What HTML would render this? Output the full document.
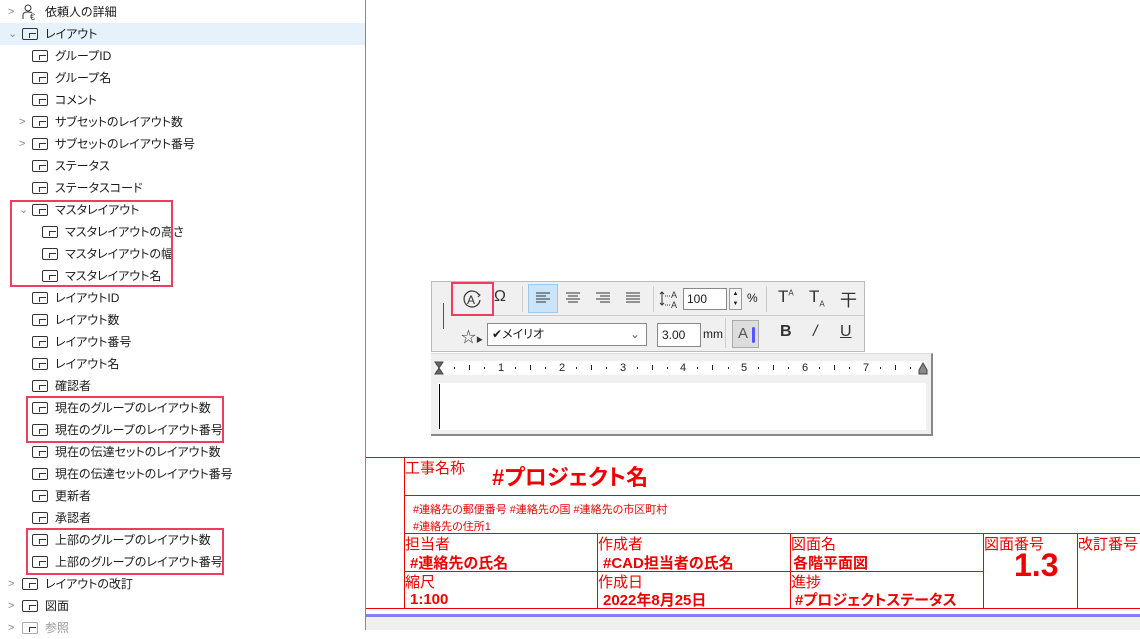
<!DOCTYPE html>
<html><head><meta charset="utf-8"><style>
*{margin:0;padding:0;box-sizing:border-box}
body{width:1140px;height:630px;overflow:hidden;background:#fff;position:relative;font-family:"Liberation Sans","Noto Sans CJK JP",sans-serif;font-size:12px;color:#1a1a1a;font-feature-settings:"palt"}
.a{position:absolute}
.r{position:absolute;height:22px;line-height:22px;white-space:nowrap}
.ic{position:absolute;top:5px;width:16px;height:12px;border:1.3px solid #333;border-radius:2px}
.ic:after{content:"";position:absolute;right:1px;bottom:1px;width:6px;height:4px;border-top:1px solid #333;border-left:1px solid #333}
.ar{position:absolute;top:0;color:#888;font-size:11px}
.t{position:absolute;top:0}
.box{position:absolute;border:2px solid #f03c5f}
.rd{color:#e00;position:absolute;white-space:nowrap}
.hl{position:absolute;height:1px;background:#e00}
.vl{position:absolute;width:1px;background:#e00}
.btn{position:absolute;font-size:16px;color:#333}
.d{position:absolute;top:367px;width:1px;height:2px;background:#222}
.k{position:absolute;top:365px;width:1px;height:5px;background:#222}
.n{position:absolute;top:361px;font-size:11px;line-height:14px;width:10px;margin-left:-4px;text-align:center;color:#222}
</style></head><body>
<div class="a" style="left:365px;top:0;width:1px;height:630px;background:#888"></div>
<div class="a" style="left:0;top:23px;width:365px;height:22px;background:#e5f1fb"></div>

<div class="r" style="top:1px;left:0;width:360px"><span class="ar" style="left:8px">&gt;</span>
<svg class="a" style="left:21px;top:3px" width="20" height="17" viewBox="0 0 20 17"><circle cx="7" cy="4" r="3" fill="none" stroke="#333"/><path d="M2 15 V11 Q2 8 7 8 Q10 8 11 9" fill="none" stroke="#333"/><text x="9" y="16" font-size="9" fill="#333" font-family="Liberation Sans">€</text></svg>
<span class="t" style="left:45px">依頼人の詳細</span></div>
<div class="r" style="top:23px;left:0"><span class="ar" style="left:8px">⌄</span><span class="ic" style="left:22px"></span><span class="t" style="left:45px">レイアウト</span></div>
<div class="r" style="top:45px"><span class="ic" style="left:32px"></span><span class="t" style="left:55px">グループID</span></div>
<div class="r" style="top:67px"><span class="ic" style="left:32px"></span><span class="t" style="left:55px">グループ名</span></div>
<div class="r" style="top:89px"><span class="ic" style="left:32px"></span><span class="t" style="left:55px">コメント</span></div>
<div class="r" style="top:111px"><span class="ar" style="left:19px">&gt;</span><span class="ic" style="left:32px"></span><span class="t" style="left:55px">サブセットのレイアウト数</span></div>
<div class="r" style="top:133px"><span class="ar" style="left:19px">&gt;</span><span class="ic" style="left:32px"></span><span class="t" style="left:55px">サブセットのレイアウト番号</span></div>
<div class="r" style="top:155px"><span class="ic" style="left:32px"></span><span class="t" style="left:55px">ステータス</span></div>
<div class="r" style="top:177px"><span class="ic" style="left:32px"></span><span class="t" style="left:55px">ステータスコード</span></div>
<div class="r" style="top:199px"><span class="ar" style="left:19px">⌄</span><span class="ic" style="left:32px"></span><span class="t" style="left:55px">マスタレイアウト</span></div>
<div class="r" style="top:221px"><span class="ic" style="left:42px"></span><span class="t" style="left:65px">マスタレイアウトの高さ</span></div>
<div class="r" style="top:243px"><span class="ic" style="left:42px"></span><span class="t" style="left:65px">マスタレイアウトの幅</span></div>
<div class="r" style="top:265px"><span class="ic" style="left:42px"></span><span class="t" style="left:65px">マスタレイアウト名</span></div>
<div class="r" style="top:287px"><span class="ic" style="left:32px"></span><span class="t" style="left:55px">レイアウトID</span></div>
<div class="r" style="top:309px"><span class="ic" style="left:32px"></span><span class="t" style="left:55px">レイアウト数</span></div>
<div class="r" style="top:331px"><span class="ic" style="left:32px"></span><span class="t" style="left:55px">レイアウト番号</span></div>
<div class="r" style="top:353px"><span class="ic" style="left:32px"></span><span class="t" style="left:55px">レイアウト名</span></div>
<div class="r" style="top:375px"><span class="ic" style="left:32px"></span><span class="t" style="left:55px">確認者</span></div>
<div class="r" style="top:397px"><span class="ic" style="left:32px"></span><span class="t" style="left:55px">現在のグループのレイアウト数</span></div>
<div class="r" style="top:419px"><span class="ic" style="left:32px"></span><span class="t" style="left:55px">現在のグループのレイアウト番号</span></div>
<div class="r" style="top:441px"><span class="ic" style="left:32px"></span><span class="t" style="left:55px">現在の伝達セットのレイアウト数</span></div>
<div class="r" style="top:463px"><span class="ic" style="left:32px"></span><span class="t" style="left:55px">現在の伝達セットのレイアウト番号</span></div>
<div class="r" style="top:485px"><span class="ic" style="left:32px"></span><span class="t" style="left:55px">更新者</span></div>
<div class="r" style="top:507px"><span class="ic" style="left:32px"></span><span class="t" style="left:55px">承認者</span></div>
<div class="r" style="top:529px"><span class="ic" style="left:32px"></span><span class="t" style="left:55px">上部のグループのレイアウト数</span></div>
<div class="r" style="top:551px"><span class="ic" style="left:32px"></span><span class="t" style="left:55px">上部のグループのレイアウト番号</span></div>
<div class="r" style="top:573px"><span class="ar" style="left:8px">&gt;</span><span class="ic" style="left:22px"></span><span class="t" style="left:45px">レイアウトの改訂</span></div>
<div class="r" style="top:595px"><span class="ar" style="left:8px">&gt;</span><span class="ic" style="left:22px"></span><span class="t" style="left:45px">図面</span></div>
<div class="r" style="top:617px;color:#999"><span class="ar" style="left:8px">&gt;</span><span class="ic" style="left:22px;border-color:#aaa"></span><span class="t" style="left:45px">参照</span></div>

<div class="box" style="left:10px;top:200px;width:163px;height:87px"></div>
<div class="box" style="left:26px;top:396px;width:198px;height:47px"></div>
<div class="box" style="left:26px;top:528px;width:198px;height:47px"></div>

<!-- toolbar -->
<div class="a" style="left:431px;top:281px;width:434px;height:71px;background:#f0f0f0;border:1px solid #bbb"></div>
<div class="a" style="left:456px;top:315px;width:408px;height:1px;background:#ccc"></div>
<div class="a" style="left:443px;top:303px;width:1px;height:26px;background:#555"></div>
<div class="box" style="left:451px;top:282px;width:43px;height:34px"></div>
<svg class="a" style="left:461px;top:288px" width="22" height="22" viewBox="0 0 22 22"><path d="M18 7 A8 8 0 1 0 19 12" fill="none" stroke="#333" stroke-width="1.2"/><path d="M16 5 L19 7 L17 9" fill="none" stroke="#333"/><text x="6" y="16" font-size="12" fill="#333" font-family="Liberation Sans">A</text></svg>
<div class="btn" style="left:494px;top:288px">Ω</div>
<div class="a" style="left:522px;top:286px;width:1px;height:26px;background:#ccc"></div>
<div class="a" style="left:528px;top:284px;width:30px;height:29px;background:#cce4f7;border:1px solid #99c9ef"></div>
<svg class="a" style="left:535px;top:292px" width="16" height="12"><path d="M1 1h14M1 4h10M1 7h14M1 10h10" stroke="#333"/></svg>
<svg class="a" style="left:565px;top:292px" width="16" height="12"><path d="M1 1h14M3 4h10M1 7h14M3 10h10" stroke="#333"/></svg>
<svg class="a" style="left:595px;top:292px" width="16" height="12"><path d="M1 1h14M5 4h10M1 7h14M5 10h10" stroke="#333"/></svg>
<svg class="a" style="left:625px;top:292px" width="16" height="12"><path d="M1 1h14M1 4h14M1 7h14M1 10h14" stroke="#333"/></svg>
<div class="a" style="left:653px;top:286px;width:1px;height:26px;background:#ccc"></div>
<svg class="a" style="left:659px;top:289px" width="22" height="20"><path d="M3 3v13M1 5l2-2 2 2M1 14l2 2 2-2" fill="none" stroke="#333"/><path d="M6 7h5M6 16h5" stroke="#333" stroke-dasharray="1 1"/><text x="12" y="9" font-size="9" fill="#333" font-family="Liberation Sans">A</text><text x="12" y="19" font-size="9" fill="#333" font-family="Liberation Sans">A</text></svg>
<div class="a" style="left:683px;top:288px;width:44px;height:22px;background:#fff;border:1px solid #888;padding-left:3px;line-height:20px">100</div>
<div class="a" style="left:729px;top:288px;width:13px;height:22px;border:1px solid #999;background:#f5f5f5;font-size:6px;text-align:center;line-height:10px">▲<br>▼</div>
<div class="a" style="left:747px;top:291px">%</div>
<div class="a" style="left:766px;top:286px;width:1px;height:26px;background:#ccc"></div>
<div class="btn" style="left:778px;top:287px;font-size:17px">T<sup style="font-size:8px">A</sup></div>
<div class="btn" style="left:809px;top:287px;font-size:17px">T<sub style="font-size:8px">A</sub></div>
<div class="btn" style="left:840px;top:286px;font-size:17px">干</div>
<div class="a" style="left:461px;top:326px;font-size:15px;color:#333">☆<span style="font-size:7px">▶</span></div>
<div class="a" style="left:487px;top:323px;width:160px;height:23px;background:#fff;border:1px solid #888;line-height:21px;padding-left:4px">✔メイリオ<span style="position:absolute;right:6px;color:#666">⌄</span></div>
<div class="a" style="left:657px;top:323px;width:44px;height:24px;background:#fff;border:1px solid #888;line-height:22px;padding-left:4px">3.00</div>
<div class="a" style="left:703px;top:327px">mm</div>
<div class="a" style="left:725px;top:318px;width:1px;height:30px;background:#ccc"></div>
<div class="a" style="left:732px;top:320px;width:27px;height:28px;background:#ddd;border:1px solid #aaa;color:#555;font-size:15px;line-height:26px;padding-left:5px">A<span style="position:absolute;left:19px;top:6px;width:3px;height:16px;background:#55f;border-radius:2px"></span></div>
<div class="btn" style="left:780px;top:323px;font-weight:bold">B</div>
<div class="btn" style="left:813px;top:323px;font-style:italic">/</div>
<div class="btn" style="left:840px;top:323px;text-decoration:underline">U</div>

<!-- ruler box -->
<div class="a" style="left:431px;top:353px;width:502px;height:83px;background:#f0f0f0;border-top:1px solid #ddd;border-right:2px solid #888;border-bottom:2px solid #888"></div>
<div class="a" style="left:437px;top:361px;width:488px;height:14px;background:#fff"></div>
<div class="a" style="left:438px;top:383px;width:488px;height:47px;background:#fff"></div>
<div class="a" style="left:439px;top:384px;width:1px;height:45px;background:#000"></div>
<svg class="a" style="left:434px;top:361px" width="10" height="14"><path d="M1 1h8L5 7 9 13H1L5 7z" fill="#666" stroke="#444"/></svg>
<svg class="a" style="left:918px;top:362px" width="10" height="13"><path d="M5 1L9 8v4H1V8z" fill="#888" stroke="#444"/></svg>
<div class="d" style="left:454px"></div><div class="k" style="left:469px"></div><div class="d" style="left:484px"></div><div class="n" style="left:500px">1</div>
<div class="d" style="left:515px"></div><div class="k" style="left:530px"></div><div class="d" style="left:545px"></div><div class="n" style="left:561px">2</div>
<div class="d" style="left:576px"></div><div class="k" style="left:591px"></div><div class="d" style="left:606px"></div><div class="n" style="left:622px">3</div>
<div class="d" style="left:637px"></div><div class="k" style="left:652px"></div><div class="d" style="left:667px"></div><div class="n" style="left:682px">4</div>
<div class="d" style="left:697px"></div><div class="k" style="left:712px"></div><div class="d" style="left:728px"></div><div class="n" style="left:743px">5</div>
<div class="d" style="left:758px"></div><div class="k" style="left:773px"></div><div class="d" style="left:788px"></div><div class="n" style="left:804px">6</div>
<div class="d" style="left:819px"></div><div class="k" style="left:834px"></div><div class="d" style="left:849px"></div><div class="n" style="left:865px">7</div>
<div class="d" style="left:880px"></div><div class="k" style="left:895px"></div><div class="d" style="left:910px"></div>

<!-- title block -->
<div class="hl" style="left:366px;top:457px;width:774px"></div>
<div class="hl" style="left:404px;top:495px;width:736px"></div>
<div class="hl" style="left:404px;top:533px;width:736px"></div>
<div class="hl" style="left:404px;top:571px;width:579px"></div>
<div class="hl" style="left:366px;top:608px;width:774px"></div>
<div class="a" style="left:366px;top:614px;width:774px;height:3px;background:#8080f0"></div>
<div class="a" style="left:366px;top:617px;width:774px;height:13px;background:#f0f0f0"></div>
<div class="vl" style="left:404px;top:457px;height:152px"></div>
<div class="vl" style="left:597px;top:533px;height:76px"></div>
<div class="vl" style="left:790px;top:533px;height:76px"></div>
<div class="vl" style="left:983px;top:533px;height:76px"></div>
<div class="vl" style="left:1077px;top:533px;height:76px"></div>
<div class="rd" style="left:405px;top:457px;font-size:15px">工事名称</div>
<div class="rd" style="left:492px;top:460px;font-size:22px;font-weight:bold">#プロジェクト名</div>
<div class="rd" style="left:413px;top:501px;font-size:11px">#連絡先の郵便番号 #連絡先の国 #連絡先の市区町村</div>
<div class="rd" style="left:413px;top:518px;font-size:11px">#連絡先の住所1</div>
<div class="rd" style="left:405px;top:533px;font-size:15px">担当者</div>
<div class="rd" style="left:410px;top:552px;font-size:15px;font-weight:bold">#連絡先の氏名</div>
<div class="rd" style="left:598px;top:533px;font-size:15px">作成者</div>
<div class="rd" style="left:603px;top:552px;font-size:15px;font-weight:bold">#CAD担当者の氏名</div>
<div class="rd" style="left:791px;top:533px;font-size:15px">図面名</div>
<div class="rd" style="left:793px;top:552px;font-size:15px;font-weight:bold">各階平面図</div>
<div class="rd" style="left:984px;top:533px;font-size:15px">図面番号</div>
<div class="rd" style="left:1014px;top:547px;font-size:32px;font-weight:bold">1.3</div>
<div class="rd" style="left:1078px;top:533px;font-size:15px">改訂番号</div>
<div class="rd" style="left:405px;top:571px;font-size:15px">縮尺</div>
<div class="rd" style="left:410px;top:591px;font-size:15px;font-weight:bold">1:100</div>
<div class="rd" style="left:598px;top:571px;font-size:15px">作成日</div>
<div class="rd" style="left:603px;top:589px;font-size:15px;font-weight:bold">2022年8月25日</div>
<div class="rd" style="left:791px;top:571px;font-size:15px">進捗</div>
<div class="rd" style="left:795px;top:589px;font-size:15px;font-weight:bold">#プロジェクトステータス</div>
</body></html>
